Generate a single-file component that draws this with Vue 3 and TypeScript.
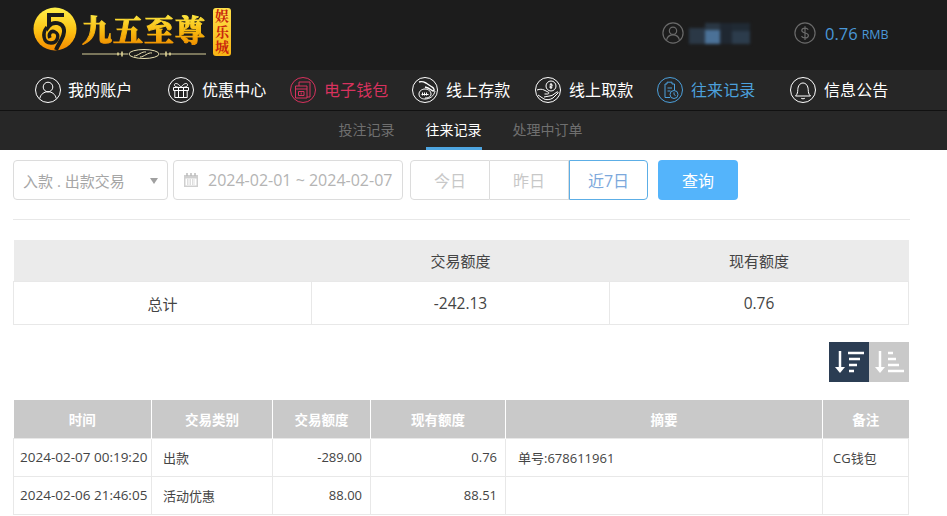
<script setup lang="ts">
const navItems = [
  { label: "我的账户", icon: "user", tone: "" },
  { label: "优惠中心", icon: "gift", tone: "wide" },
  { label: "电子钱包", icon: "wallet", tone: "red" },
  { label: "线上存款", icon: "deposit", tone: "" },
  { label: "线上取款", icon: "withdraw", tone: "" },
  { label: "往来记录", icon: "record", tone: "blue" },
  { label: "信息公告", icon: "bell", tone: "wide" },
];

const subTabs = [
  { label: "投注记录", active: false },
  { label: "往来记录", active: true },
  { label: "处理中订单", active: false },
];

const columns = [
  { title: "时间", width: 138 },
  { title: "交易类别", width: 121 },
  { title: "交易额度", width: 98 },
  { title: "现有额度", width: 135 },
  { title: "摘要", width: 317 },
  { title: "备注", width: 86 },
];

const rows = [
  { time: "2024-02-07 00:19:20", type: "出款", amount: "-289.00", balance: "0.76", note: "单号:678611961", remark: "CG钱包" },
  { time: "2024-02-06 21:46:05", type: "活动优惠", amount: "88.00", balance: "88.51", note: "", remark: "" },
];
</script>

<template>
  <div class="page">
    <header class="top">
      <div class="logo">
        <svg class="logo-mark" viewBox="0 0 44 44" width="44" height="44">
          <defs>
            <linearGradient id="gold" x1="0" y1="0" x2="0" y2="1">
              <stop offset="0" stop-color="#fff04a" />
              <stop offset="0.55" stop-color="#fdc112" />
              <stop offset="1" stop-color="#f58a00" />
            </linearGradient>
          </defs>
          <circle cx="22" cy="22" r="21.500" fill="url(#gold)" />
          <path d="M31 8H16V19C20 14 30 15 31 23C32 30 26 35 23 43" fill="none" stroke="#1b1b1b" stroke-width="4" />
          <path d="M14 20C9 26 10 36 18 36C25 36 27 27 22 25C18 23 15 27 17 31" fill="none" stroke="#1b1b1b" stroke-width="3.500" />
        </svg>
        <div class="logo-title">
          <span class="logo-name">九五至尊</span>
          <svg class="logo-flourish" viewBox="0 0 124 12" width="124" height="12">
            <path d="M0 6H46M78 6H124" stroke="#d8cf9a" stroke-width="1" />
            <path d="M40 3.500v5M36 4.500v3M84 3.500v5M88 4.500v3" stroke="#e8dc9a" stroke-width="1.500" />
            <ellipse cx="62" cy="6" rx="15" ry="4.500" fill="none" stroke="#e8e0b0" stroke-width="1" />
            <path d="M52 8c4 0 8-5 12-4M58 9c4 0 8-5 12-4" fill="none" stroke="#e8e0b0" stroke-width="1" />
          </svg>
        </div>
        <div class="logo-tag">娱乐城</div>
      </div>
      <div class="account">
        <svg class="top-icon" viewBox="0 0 24 24" width="22" height="22">
          <circle cx="12" cy="12" r="11" />
          <circle cx="12" cy="9.500" r="4" />
          <path d="M5 19.500c1-4 4-5.500 7-5.500s6 1.500 7 5.500" />
        </svg>
        <div class="masked" aria-hidden="true">
          <i class="m1"></i><i class="m2"></i><i class="m3"></i><i class="m4"></i>
        </div>
      </div>
      <div class="balance">
        <svg class="top-icon" viewBox="0 0 24 24" width="22" height="22">
          <circle cx="12" cy="12" r="11" />
          <path d="M15.500 8.500c-.7-1.300-2-1.800-3.500-1.800-2 0-3.500 1-3.500 2.600 0 3.600 7.200 1.800 7.200 5.400 0 1.700-1.600 2.700-3.700 2.700-1.700 0-3.100-.7-3.800-2M12 4.500v15" />
        </svg>
        <span class="amount">0.76</span>
        <span class="unit">RMB</span>
      </div>
    </header>

    <nav class="nav">
      <a v-for="item in navItems" :key="item.label" class="nav-item" :class="item.tone">
        <svg viewBox="0 0 26 26" width="26" height="26" class="nav-icon">
          <circle cx="13" cy="13" r="12.500" />
          <template v-if="item.icon === 'user'">
            <circle cx="13" cy="10" r="4.800" />
            <path d="M4.800 21.500c.8-4.500 4.500-6.700 8.200-6.700s7.400 2.200 8.200 6.700" />
          </template>
          <template v-else-if="item.icon === 'gift'">
            <path d="M5.500 10.500h15v3h-15zM6.800 13.500v7h12.400v-7M10.500 10.500v10M15.500 10.500v10" />
            <path d="M13 10.500c-2-4-6-5-6.500-3S9 10.500 13 10.500c4 0 7-1 6.500-3s-4.500-1-6.500 3z" />
          </template>
          <template v-else-if="item.icon === 'wallet'">
            <path d="M9 5h11v15h-3M9 5v4M5.500 9h11.500v12H5.500zM5.500 12H17" />
            <path d="M8.500 14.500h5.500v4H8.500zM11.200 15.500v2" />
          </template>
          <template v-else-if="item.icon === 'deposit'">
            <path d="M7 5c3-1 5 0 7 1l6 4c2 1 3 4 1 4l-5-3-3-1" stroke-width="1.400" />
            <path d="M23 14c-1 5-5 8-10 8-4 0-6-2-6-5s3-5 6-5 6 2 6 5-3 4-6 4" />
            <path d="M9.500 17.500h7M10.500 15.500v3M12.500 15.500v3M14.500 15.500v3" />
          </template>
          <template v-else-if="item.icon === 'withdraw'">
            <circle cx="16" cy="9" r="5" />
            <path d="M16 6v6M14.500 8c.5-1 3-1 3 .2s-3 .8-3 1.800 2.500 1 3 0" />
            <path d="M2 13c3-1 5-1 7 0l4 2c1.500.5 1 2-.5 2h-3M9 20l8-1.500 5-3.500c1-.5 1.500.5 1 1l-5 5c-3 2-7 2-9 1L3 18" />
          </template>
          <template v-else-if="item.icon === 'record'">
            <path d="M8 7h2V5.200h5V7h2.500v6M13 20.500H8V7M10.500 11h4.500M10.500 14h3" />
            <circle cx="17" cy="17.500" r="4" />
            <path d="M17 15.300v2.200l1.500 1" />
          </template>
          <template v-else>
            <path d="M5.500 19h15c-2-1.800-2.200-4-2.300-6.500-.2-3.500-2-6.500-5.200-6.500s-5 3-5.200 6.500C7.700 15 7.500 17.200 5.500 19z" />
            <path d="M11 21c.4 1 3.600 1 4 0" />
          </template>
        </svg>
        <span>{{ item.label }}</span>
      </a>
    </nav>

    <div class="subnav">
      <a v-for="tab in subTabs" :key="tab.label" class="subtab" :class="{ active: tab.active }">{{ tab.label }}</a>
    </div>

    <main class="content">
      <div class="filters">
        <div class="select">
          <span>入款 . 出款交易</span>
          <i class="caret"></i>
        </div>
        <div class="date">
          <svg viewBox="0 0 16 16" width="16" height="16">
            <path d="M1 3h14v12H1z" fill="#cfcfcf" />
            <path d="M4 1v3M8 1v3M12 1v3" stroke="#bcbcbc" stroke-width="1.500" />
            <path d="M2.500 6.500h11v7h-11z" fill="#fff" />
            <path d="M4 8h8M4 10h8M4 12h8" stroke="#bdbdbd" stroke-width="1" stroke-dasharray="1.500 1" />
          </svg>
          <span>2024-02-01 ~ 2024-02-07</span>
        </div>
        <div class="range">
          <button class="range-btn">今日</button>
          <button class="range-btn">昨日</button>
          <button class="range-btn on">近7日</button>
        </div>
        <button class="search">查询</button>
      </div>

      <table class="summary">
        <colgroup>
          <col style="width: 298px" />
          <col style="width: 298px" />
          <col style="width: 299px" />
        </colgroup>
        <thead>
          <tr><th></th><th>交易额度</th><th>现有额度</th></tr>
        </thead>
        <tbody>
          <tr><td>总计</td><td class="figure">-242.13</td><td class="figure">0.76</td></tr>
        </tbody>
      </table>

      <div class="sort">
        <button class="sort-btn dark">
          <svg viewBox="0 0 40 40" width="40" height="40">
            <path d="M11 9v19" stroke="#fff" stroke-width="2.500" />
            <path d="M6 25h10l-5 6z" fill="#fff" />
            <path d="M19 11h16M20 17h11M20 23h8M20 29h5" stroke="#fff" stroke-width="2.500" />
          </svg>
        </button>
        <button class="sort-btn">
          <svg viewBox="0 0 40 40" width="40" height="40">
            <path d="M11 9v19" stroke="#fff" stroke-width="2.500" />
            <path d="M6 25h10l-5 6z" fill="#fff" />
            <path d="M19 11h5M19 17h8M19 23h11M19 29h16" stroke="#fff" stroke-width="2.500" />
          </svg>
        </button>
      </div>

      <table class="records">
        <colgroup>
          <col v-for="col in columns" :key="col.title" :style="{ width: col.width + 'px' }" />
        </colgroup>
        <thead>
          <tr><th v-for="col in columns" :key="col.title">{{ col.title }}</th></tr>
        </thead>
        <tbody>
          <tr v-for="row in rows" :key="row.time">
            <td class="time">{{ row.time }}</td>
            <td class="type">{{ row.type }}</td>
            <td class="num">{{ row.amount }}</td>
            <td class="num">{{ row.balance }}</td>
            <td class="note">{{ row.note }}</td>
            <td class="remark">{{ row.remark }}</td>
          </tr>
        </tbody>
      </table>
    </main>
  </div>
</template>

<style>
html,
body {
  margin: 0;
  background: #fff;
  overflow: hidden;
}
</style>

<style scoped>
.page {
  width: 947px;
  height: 516px;
  overflow: hidden;
  font-family: "Open Sans", "Noto Sans CJK SC", sans-serif;
  font-size: 14px;
  color: #444;
}

/* top bar */
.top {
  display: flex;
  align-items: center;
  height: 70px;
  background: #1c1c1c;
}
.logo {
  display: flex;
  align-items: flex-start;
  width: 630px;
  padding: 7px 0 0 33px;
  box-sizing: border-box;
  height: 70px;
}
.logo-mark {
  flex: none;
}
.logo-title {
  display: flex;
  flex-direction: column;
  align-items: center;
  margin-left: 5px;
}
.logo-name {
  font-family: "Noto Serif CJK SC", "Noto Sans CJK SC", serif;
  font-size: 30px;
  font-weight: 900;
  line-height: 34px;
  letter-spacing: 1px;
  margin-top: 4px;
  -webkit-text-stroke: 1px transparent;
  background: linear-gradient(#fff04a, #f8b90f 60%, #f09000);
  -webkit-background-clip: text;
  background-clip: text;
  color: transparent;
}
.logo-flourish {
  margin-top: 3px;
}
.logo-tag {
  width: 18px;
  height: 48px;
  margin: 1px 0 0 7px;
  border-radius: 3px;
  background: linear-gradient(#ffe14a, #f8b414);
  color: #c8260c;
  font-family: "Noto Serif CJK SC", "Noto Sans CJK SC", serif;
  font-size: 14px;
  font-weight: 700;
  line-height: 18px;
  letter-spacing: 1.500px;
  writing-mode: vertical-rl;
  text-align: center;
  box-sizing: border-box;
}
.top-icon {
  flex: none;
  fill: none;
  stroke: #6a6a6a;
  stroke-width: 1.300;
}
.account {
  display: flex;
  align-items: center;
  gap: 5px;
  width: 132px;
  padding: 0 0 4px 32px;
  box-sizing: border-box;
}
.masked {
  display: flex;
  width: 61px;
  height: 21px;
  filter: blur(1.500px);
}
.masked i {
  display: block;
  height: 100%;
}
.m1 { width: 16px; margin-top: 5px; height: 16px !important; background: #2b3846; }
.m2 { width: 15px; background: linear-gradient(#2a3744 35%, #4b7197 35%); }
.m3 { width: 12px; background: #1f2731; }
.m4 { width: 18px; background: linear-gradient(#202a34 40%, #2c3c4c 40%); }
.balance {
  display: flex;
  align-items: center;
  color: #4a98d8;
  padding: 0 0 4px 32px;
}
.balance .top-icon {
  margin-right: 9px;
}
.amount {
  font-size: 16.500px;
  margin-right: 4px;
}
.unit {
  font-size: 12.500px;
  padding-top: 2px;
}

/* main nav */
.nav {
  display: flex;
  align-items: center;
  gap: 25px;
  height: 40px;
  padding-left: 35px;
  background: #262626;
  border-bottom: 1px solid #111;
}
.nav-item {
  display: flex;
  align-items: center;
  gap: 8px;
  width: 97px;
  flex: none;
  color: #fff;
  font-size: 16px;
  white-space: nowrap;
}
.nav-item:first-child {
  gap: 7px;
}
.nav-item:nth-child(5) {
  margin-left: 1px;
}
.nav-item span {
  margin-top: -2px;
  letter-spacing: 0.100px;
}
.nav-icon {
  flex: none;
  fill: none;
  stroke: currentColor;
  stroke-width: 1;
}
.nav-item.wide {
  margin-left: 11px;
}
.nav-item.red {
  color: #d8325e;
}
.nav-item.blue {
  color: #4ca0dc;
}

/* sub nav */
.subnav {
  display: flex;
  justify-content: center;
  gap: 31px;
  height: 39px;
  padding-right: 26px;
  background: #272727;
  box-sizing: border-box;
}
.subtab {
  height: 39px;
  line-height: 38px;
  font-size: 14px;
  color: #6f6f6f;
  box-sizing: border-box;
}
.subtab.active {
  color: #fff;
  border-bottom: 3px solid #4ea5e0;
}

/* filters */
.content {
  padding: 10px 38px 0 13px;
}
.filters {
  display: flex;
  align-items: stretch;
  height: 40px;
  padding-bottom: 19px;
  border-bottom: 1px solid #e8e8e8;
  width: 897px;
  box-sizing: content-box;
}
.select,
.date {
  display: flex;
  align-items: center;
  box-sizing: border-box;
  height: 40px;
  border: 1px solid #dcdcdc;
  border-radius: 4px;
  color: #a6a6a6;
}
.select {
  width: 155px;
  padding: 0 9px;
  font-size: 15px;
  justify-content: space-between;
  white-space: nowrap;
}
.caret {
  width: 0;
  height: 0;
  border-left: 4px solid transparent;
  border-right: 4px solid transparent;
  border-top: 6px solid #a0a0a0;
  margin-top: 1px;
}
.date {
  width: 230px;
  margin-left: 5px;
  padding-left: 9px;
  gap: 9px;
  font-size: 16px;
  color: #b4b4b4;
  white-space: nowrap;
}
.range {
  display: flex;
  margin-left: 7px;
  height: 40px;
}
.range-btn {
  width: 79px;
  height: 40px;
  padding: 0;
  background: #fff;
  border: 1px solid #dcdcdc;
  border-left: 0;
  font: inherit;
  font-size: 16px;
  color: #c8c8c8;
}
.range-btn:first-child {
  width: 80px;
  border-left: 1px solid #dcdcdc;
  border-radius: 4px 0 0 4px;
}
.range-btn.on {
  color: #7ca8dc;
  border: 1px solid #5caee6;
  border-radius: 0 4px 4px 0;
}
.search {
  width: 80px;
  height: 40px;
  margin-left: 10px;
  padding: 0;
  border: 0;
  border-radius: 4px;
  background: #54b4fb;
  color: #fff;
  font: inherit;
  font-size: 16px;
}

/* summary table */
table {
  border-collapse: collapse;
  table-layout: fixed;
  width: 895px;
}
.summary {
  margin-top: 20px;
}
.summary th {
  height: 41px;
  padding: 0;
  background: #ebebeb;
  font-weight: 400;
  color: #444;
  font-size: 15px;
}
.summary td {
  height: 43px;
  padding: 0;
  text-align: center;
  font-size: 15px;
  border: 1px solid #e8e8e8;
  box-sizing: border-box;
  color: #444;
}
.summary td.figure {
  font-size: 15.500px;
}

/* sort */
.sort {
  display: flex;
  justify-content: flex-end;
  width: 896px;
  margin-top: 17px;
}
.sort-btn {
  display: block;
  width: 40px;
  height: 40px;
  padding: 0;
  border: 0;
  background: #c9c9c9;
}
.sort-btn svg {
  display: block;
}
.sort-btn.dark {
  background: #2b3d53;
}

/* records table */
.records {
  margin-top: 18px;
}
.records th {
  height: 38px;
  padding: 0;
  background: #c9c9c9;
  color: #fff;
  font-size: 13.500px;
  font-weight: 700;
  border-left: 1px solid #fff;
  box-sizing: border-box;
}
.records th:first-child {
  border-left: 0;
}
.records td {
  height: 38px;
  padding: 0;
  font-size: 13px;
  color: #444;
  border: 1px solid #e8e8e8;
  box-sizing: border-box;
  white-space: nowrap;
}
.records td.time {
  padding-left: 6px;
  font-size: 13.500px;
}
.records td.type {
  padding-left: 11px;
}
.records td.num {
  text-align: right;
  padding-right: 8px;
}
.records td.note {
  padding-left: 12px;
}
.records td.remark {
  padding-left: 10px;
}
</style>
